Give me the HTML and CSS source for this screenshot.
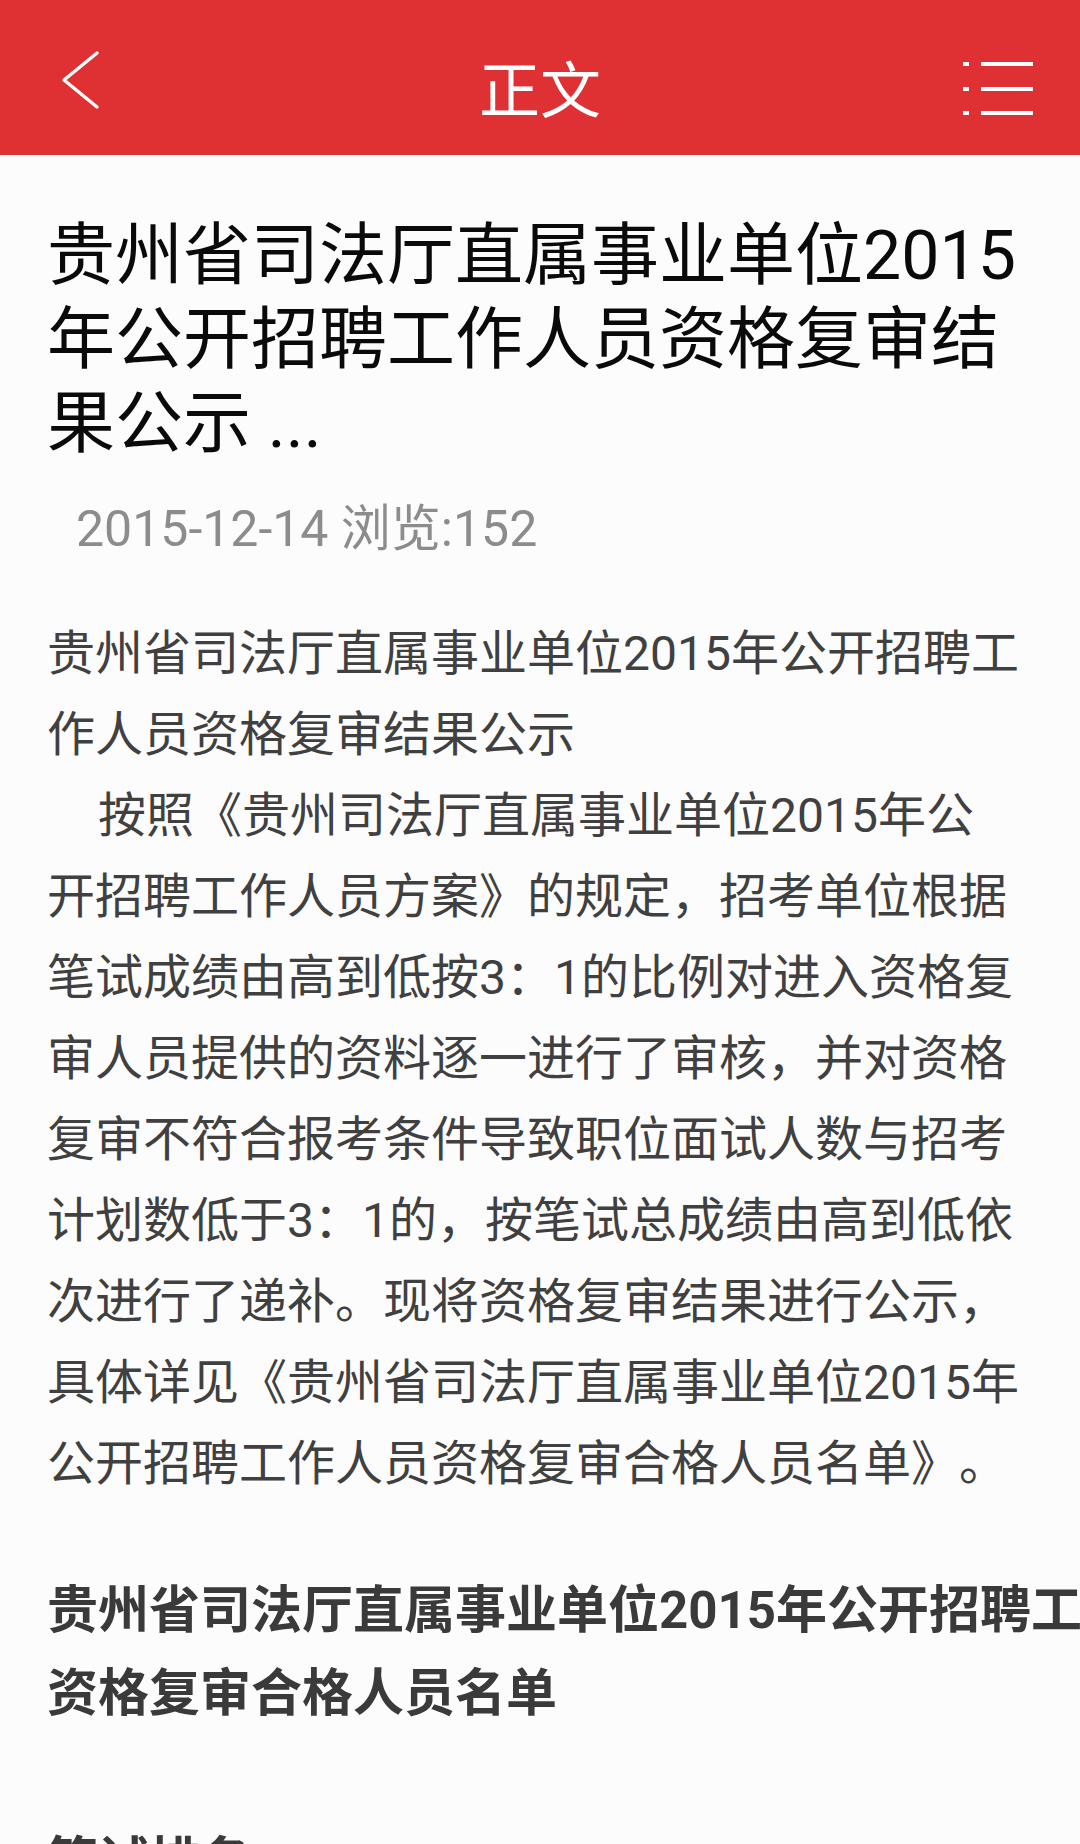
FILE: index.html
```html
<!DOCTYPE html>
<html lang="zh-CN">
<head>
<meta charset="utf-8">
<title>正文</title>
<link rel="stylesheet" href="styles.css">
</head>
<body>
<header class="topbar">
  <div class="topbar-left">
    <svg class="icon-back" width="40" height="60" viewBox="0 0 40 60" aria-hidden="true">
      <path d="M37 3 L4 30 L37 57" fill="none" stroke="#fff" stroke-width="3.4" stroke-linecap="round" stroke-linejoin="round"/>
    </svg>
  </div>
  <div class="topbar-title">正文</div>
  <div class="topbar-right">
    <svg class="icon-menu" width="80" height="60" viewBox="0 0 80 60" aria-hidden="true">
      <rect x="3" y="5" width="6" height="4" fill="#fff"/>
      <rect x="21" y="5" width="52" height="4" fill="#fff"/>
      <rect x="3" y="30" width="6" height="4" fill="#fff"/>
      <rect x="21" y="30" width="52" height="4" fill="#fff"/>
      <rect x="3" y="54" width="6" height="4" fill="#fff"/>
      <rect x="21" y="54" width="52" height="4" fill="#fff"/>
    </svg>
  </div>
</header>
<main class="article">
  <h1 class="article-title">贵州省司法厅直属事业单位2015年公开招聘工作人员资格复审结果公示 ...</h1>
  <div class="article-meta">2015-12-14 浏览:152</div>
  <div class="article-body">
    <p class="para">贵州省司法厅直属事业单位2015年公开招聘工作人员资格复审结果公示</p>
    <p class="para indent">按照《贵州司法厅直属事业单位2015年公开招聘工作人员方案》的规定，招考单位根据笔试成绩由高到低按3：1的比例对进入资格复审人员提供的资料逐一进行了审核，并对资格复审不符合报考条件导致职位面试人数与招考计划数低于3：1的，按笔试总成绩由高到低依次进行了递补。现将资格复审结果进行公示，具体详见《贵州省司法厅直属事业单位2015年公开招聘工作人员资格复审合格人员名单》。</p>
    <div class="wide">
      <p class="list-title">贵州省司法厅直属事业单位2015年公开招聘工作人员资格复审合格人员名单</p>
      <p class="list-sub">笔试排名</p>
    </div>
  </div>
</main>
</body>
</html>
```
FILE: styles.css
```css
html, body {
  margin: 0;
  padding: 0;
}
body {
  background: #fcfcfc;
  width: 1080px;
  height: 1844px;
  overflow: hidden;
  font-family: Roboto, "Noto Sans CJK SC", sans-serif;
  text-spacing-trim: space-all;
}
.topbar {
  height: 155px;
  background: #df3034;
  display: grid;
  grid-template-columns: 1fr auto 1fr;
  align-items: start;
}
.topbar-left {
  justify-self: start;
  padding-left: 60px;
  padding-top: 50px;
}
.topbar-right {
  justify-self: end;
  padding-right: 40px;
  padding-top: 57px;
}
.icon-back, .icon-menu {
  display: block;
}
.topbar-title {
  color: #fff;
  font-family: "Noto Sans CJK SC", sans-serif;
  font-size: 61px;
  line-height: 61px;
  padding-top: 56px;
}
.article {
  padding: 59px 0 0 47px;
}
.article-title {
  margin: 0;
  width: 990px;
  font-size: 68px;
  line-height: 84px;
  font-weight: 400;
  color: #0a0a0a;
}
.article-meta {
  margin-top: 33px;
  padding-left: 29px;
  font-size: 50px;
  line-height: 60px;
  color: #8c8c8c;
}
.article-body {
  margin-top: 54px;
  color: #404040;
  font-size: 48px;
  line-height: 81px;
}
.para {
  margin: 0;
  width: 973.3px;
}
.indent {
  text-indent: 51px;
}
.wide {
  width: 1200px;
  margin-top: 65px;
}
.list-title {
  margin: 0;
  font-size: 51px;
  line-height: 83px;
  font-weight: 700;
  color: #3a3a3a;
}
.list-sub {
  margin: 85px 0 0;
  font-size: 51px;
  line-height: 83px;
  font-weight: 700;
  color: #3a3a3a;
}
```
